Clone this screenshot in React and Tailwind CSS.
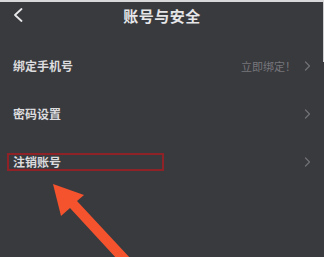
import React from "react";

const ROWS = [
  { label: "绑定手机号", hint: "立即绑定！" },
  { label: "密码设置" },
  { label: "注销账号", marked: true },
];

function Chevron() {
  return (
    <svg width="7" height="10" viewBox="0 0 7 10" fill="none" stroke="#707074" strokeWidth="1.3" strokeLinecap="round" strokeLinejoin="round">
      <polyline points="1.5 1 5.5 5 1.5 9" />
    </svg>
  );
}

export default function App() {
  return (
    <div
      className="relative w-[324px] h-[257px] overflow-hidden bg-[#393a3e] border-t-2 border-[#d8d8da]"
      style={{ fontFamily: '"Noto Sans CJK SC", "Noto Sans", sans-serif' }}
    >
      <div className="absolute right-0 top-0 w-px h-[60px] bg-[#cfcfd2]" />

      {/* header */}
      <header className="relative h-[28px] flex items-center justify-center">
        <svg className="absolute left-[13px] top-[6px]" width="11" height="14" viewBox="0 0 11 14" fill="none" stroke="#e8e8ea" strokeWidth="1.8" strokeLinecap="round" strokeLinejoin="round">
          <polyline points="8.5 1 2 7 8.5 13" />
        </svg>
        <h1 className="text-[15px] font-semibold text-[#e6e6e8] tracking-[0.5px]">账号与安全</h1>
      </header>

      {/* list */}
      <main className="pt-[12px]">
        {ROWS.map((row) => (
          <div key={row.label} className="relative h-12 flex items-center justify-between pl-[13px] pr-[13px]">
            <span className="text-[12px] font-semibold text-[#dcdcde]">{row.label}</span>
            <div className="flex items-center gap-[8px]">
              {row.hint && <span className="text-[11px] text-[#77777b]">{row.hint}</span>}
              <Chevron />
            </div>
            {row.marked && (
              <div className="absolute left-[7px] top-[15px] w-[157px] h-[18px] border-2 border-[#8e2226]" />
            )}
          </div>
        ))}
      </main>

      {/* annotation arrow */}
      <svg className="absolute inset-0" width="324" height="257" viewBox="0 0 324 257">
        <polygon
          points="53,182 84,193 77,199 131,257 117,257 70,206 61,214"
          fill="#f4532e"
        />
      </svg>
    </div>
  );
}
